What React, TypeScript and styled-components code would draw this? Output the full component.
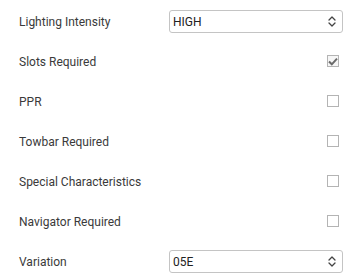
import React from 'react';
import styled, { createGlobalStyle } from 'styled-components';

const GlobalStyle = createGlobalStyle`
  body {
    margin: 0;
    background: #ffffff;
    font-family: Roboto, 'Liberation Sans', sans-serif;
  }
`;

type Field =
  | { kind: 'select'; label: string; value: string }
  | { kind: 'check'; label: string; checked: boolean };

const fields: Field[] = [
  { kind: 'select', label: 'Lighting Intensity', value: 'HIGH' },
  { kind: 'check', label: 'Slots Required', checked: true },
  { kind: 'check', label: 'PPR', checked: false },
  { kind: 'check', label: 'Towbar Required', checked: false },
  { kind: 'check', label: 'Special Characteristics', checked: false },
  { kind: 'check', label: 'Navigator Required', checked: false },
  { kind: 'select', label: 'Variation', value: '05E' },
];

function Chevrons() {
  return (
    <svg width="8" height="11" viewBox="0 0 8 11" fill="none">
      <path
        d="M1 4 L4 1 L7 4 M1 7 L4 10 L7 7"
        stroke="#444"
        strokeWidth="1.3"
        strokeLinecap="round"
        strokeLinejoin="round"
      />
    </svg>
  );
}

function App() {
  return (
    <>
      <GlobalStyle />
      <Form>
        {fields.map((field) => (
          <Row key={field.label}>
            <Label>{field.label}</Label>
            {field.kind === 'select' ? (
              <Select>
                <span>{field.value}</span>
                <Chevrons />
              </Select>
            ) : (
              <Check $checked={field.checked}>
                {field.checked && (
                  <svg width="10" height="9" viewBox="0 0 10 9">
                    <path
                      d="M1 4.5 L3.8 7.3 L9 1.6"
                      stroke="#6a6a6a"
                      strokeWidth="2"
                      fill="none"
                    />
                  </svg>
                )}
              </Check>
            )}
          </Row>
        ))}
      </Form>
    </>
  );
}

const Form = styled.div`
  display: flex;
  flex-direction: column;
  padding: 1px 21px 0 19px;
`;

const Row = styled.div`
  display: flex;
  align-items: center;
  justify-content: space-between;
  height: 40px;
`;

const Label = styled.span`
  padding-top: 2px;
  font-size: 12px;
  color: #3a3a3a;
`;

const Select = styled.div`
  box-sizing: border-box;
  display: flex;
  align-items: center;
  justify-content: space-between;
  width: 174px;
  height: 23px;
  padding: 1px 6px 0 3px;
  border: 1px solid #c4c4c4;
  border-radius: 3px;
  font-size: 12px;
  color: #222222;
`;

const Check = styled.div<{ $checked: boolean }>`
  box-sizing: border-box;
  display: flex;
  align-items: center;
  justify-content: center;
  width: 12px;
  height: 12px;
  margin-right: 4px;
  border: 1px solid #b4b4b4;
  background: ${({ $checked }) => ($checked ? '#f6f6f6' : '#ffffff')};
`;

export default App;
